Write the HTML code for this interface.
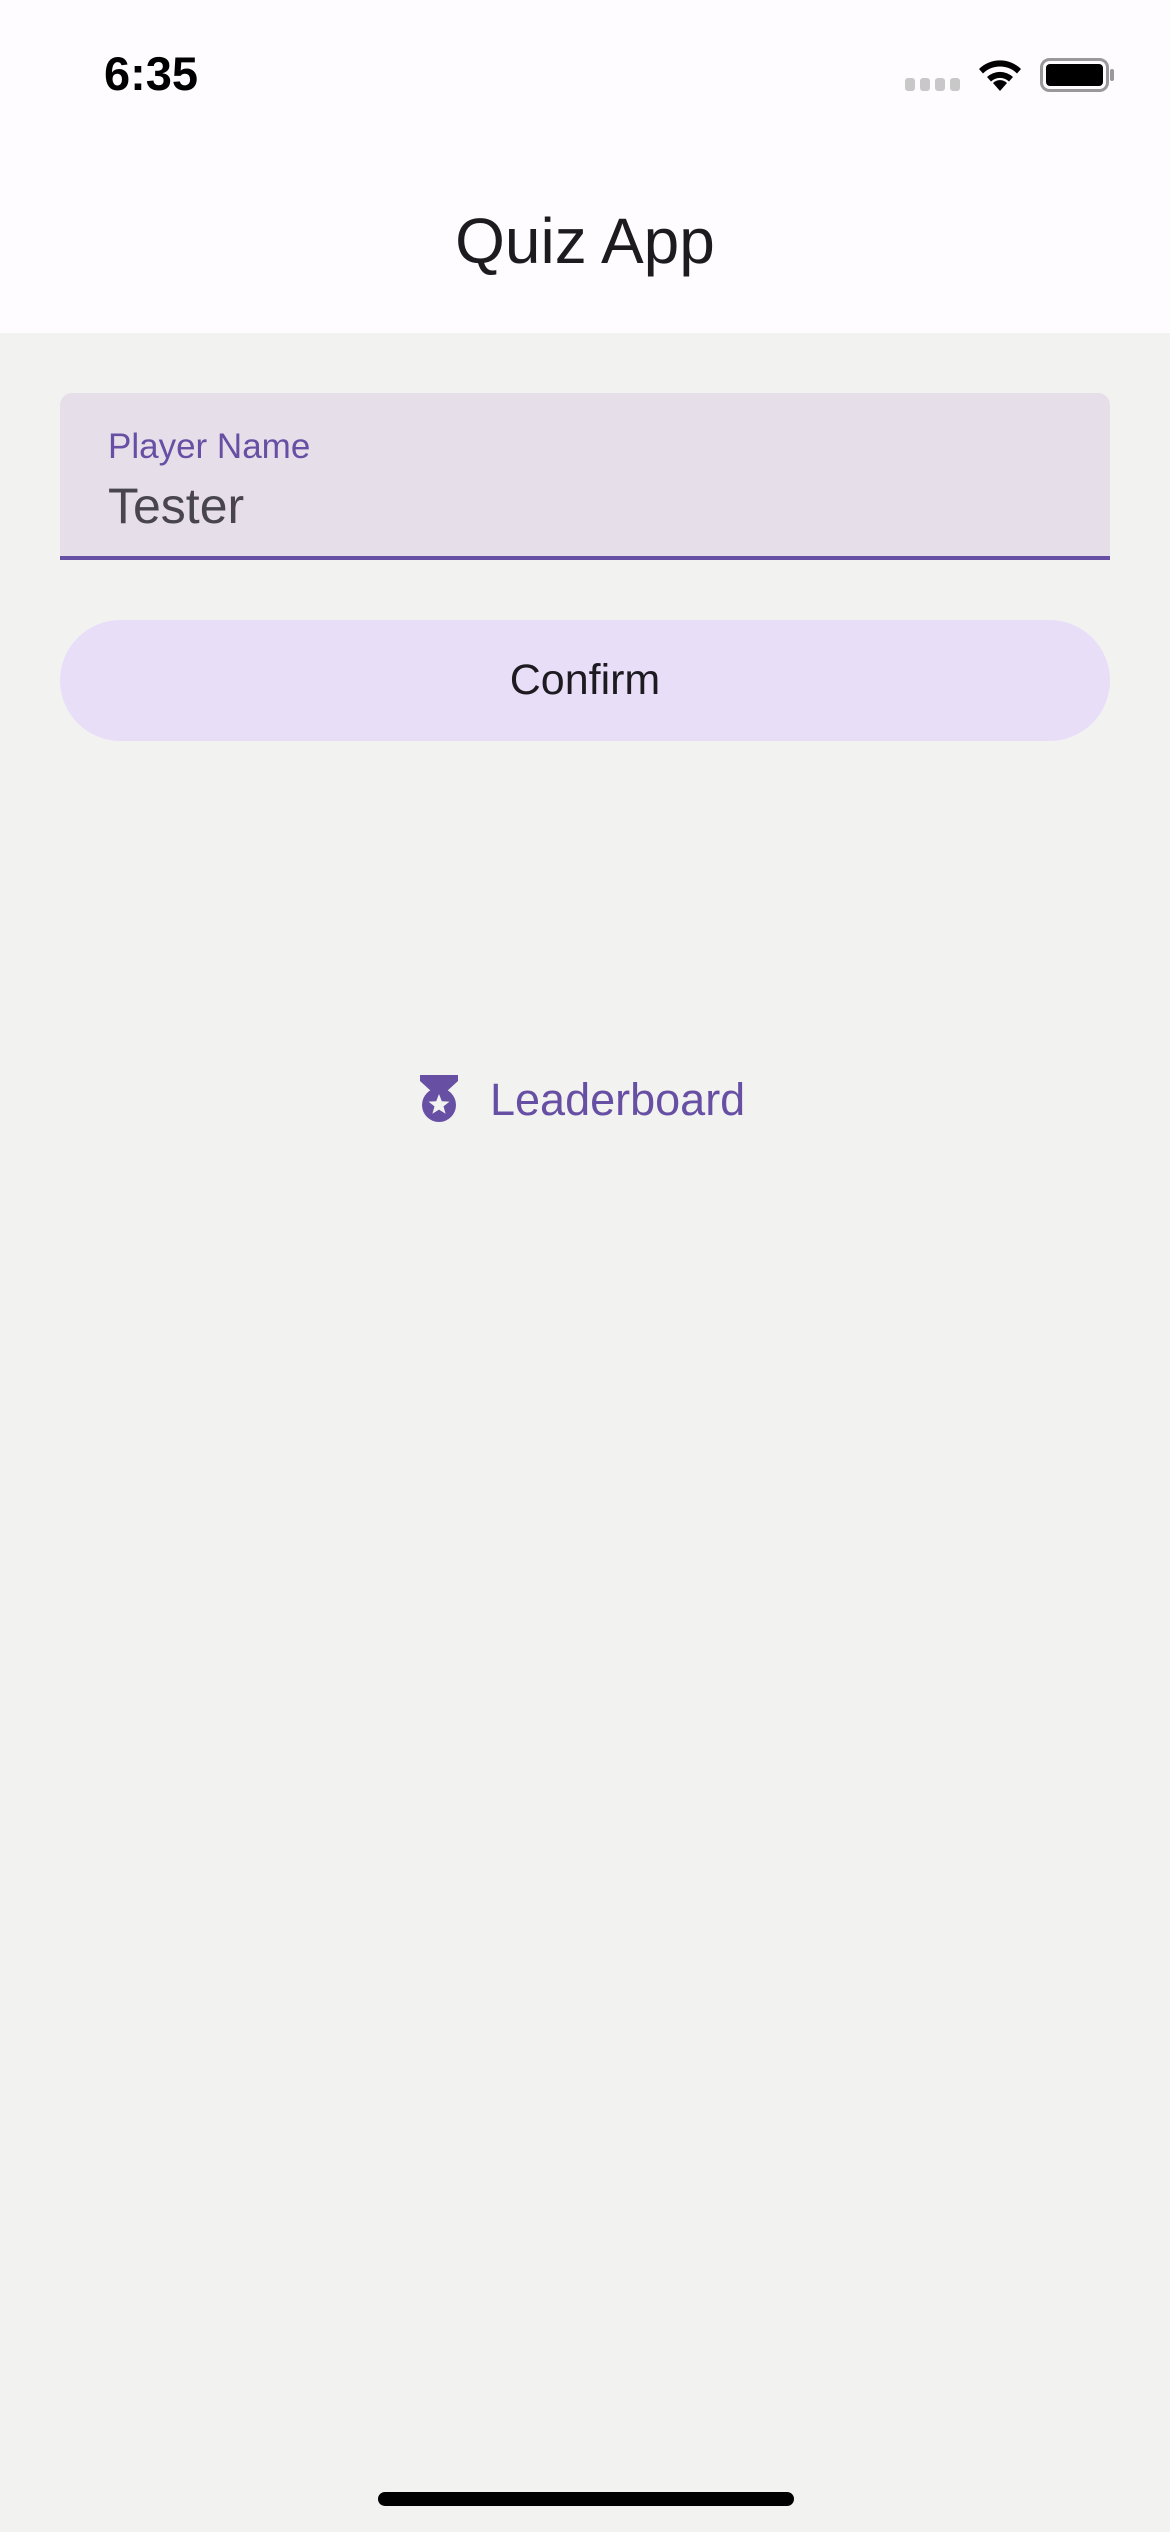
<!DOCTYPE html>
<html><head><meta charset="utf-8"><style>
body{margin:0;width:1170px;height:2532px;background:#f2f2f1;font-family:"Liberation Sans",sans-serif;position:relative;overflow:hidden}
.hdr{position:absolute;left:0;top:0;width:1170px;height:333px;background:#fffcff}
.abs{position:absolute}
</style></head><body>
<div class="hdr"></div>
<div class="abs" style="left:104px;top:46px;font-size:47px;font-weight:bold;color:#000">6:35</div>
<svg class="abs" style="left:905px;top:78px" width="56" height="14"><g fill="#c8c8c8"><rect x="0" y="0" width="10" height="13" rx="3"/><rect x="15" y="0" width="10" height="13" rx="3"/><rect x="30" y="0" width="10" height="13" rx="3"/><rect x="45" y="0" width="10" height="13" rx="3"/></g></svg>
<svg class="abs" style="left:974px;top:55px" width="52" height="38" viewBox="0 0 52 38"><path d="M26 36 L19 28 A10 10 0 0 1 33 28 Z" fill="#000"/><path d="M13 22 A19 19 0 0 1 39 22 L35 26.5 A13 13 0 0 0 17 26.5 Z" fill="#000"/><path d="M5 14 A30 30 0 0 1 47 14 L43 18.5 A24 24 0 0 0 9 18.5 Z" fill="#000"/></svg>
<svg class="abs" style="left:1040px;top:58px" width="76" height="34"><rect x="1.5" y="1.5" width="66" height="31" rx="8" fill="none" stroke="#999" stroke-width="3"/><rect x="6" y="6" width="57" height="22" rx="4" fill="#000"/><rect x="70" y="11" width="4" height="12" rx="2" fill="#999"/></svg>
<div class="abs" style="left:0;width:1170px;top:204px;text-align:center;font-size:64px;color:#1d1b20">Quiz App</div>
<div class="abs" style="left:60px;top:393px;width:1050px;height:163px;background:#e6dfea;border-radius:12px 12px 0 0;border-bottom:4px solid #6750a4"></div>
<div class="abs" style="left:108px;top:427px;font-size:35px;color:#6750a4">Player Name</div>
<div class="abs" style="left:108px;top:477px;font-size:50px;color:#49454f">Tester</div>
<div class="abs" style="left:60px;top:620px;width:1050px;height:121px;background:#e8def8;border-radius:61px;text-align:center;line-height:121px;font-size:43px;color:#1d1b20">Confirm</div>
<svg class="abs" style="left:420px;top:1075px" width="38" height="48" viewBox="0 0 38 48"><path d="M0 0 H38 V6 L26 17 H12 L0 6 Z" fill="#6750a4"/><circle cx="19" cy="30" r="17" fill="#6750a4"/><path d="M19 19 L21.8 26.2 L29.5 26.6 L23.5 31.4 L25.6 38.8 L19 34.6 L12.4 38.8 L14.5 31.4 L8.5 26.6 L16.2 26.2 Z" fill="#f2f2f1"/></svg>
<div class="abs" style="left:490px;top:1074px;font-size:45px;color:#6750a4">Leaderboard</div>
<div class="abs" style="left:378px;top:2492px;width:416px;height:14px;border-radius:7px;background:#000"></div>
</body></html>
